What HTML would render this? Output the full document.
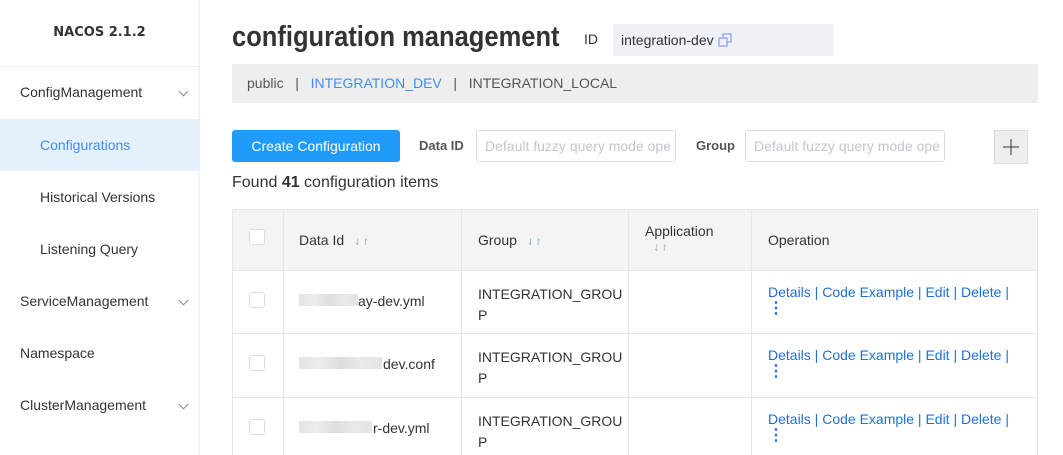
<!DOCTYPE html>
<html><head><meta charset="utf-8"><style>
*{box-sizing:border-box;margin:0;padding:0}
body{width:1063px;height:455px;overflow:hidden;background:#fff;font-family:"Liberation Sans",sans-serif;color:#333;position:relative;font-size:14px}
.a{position:absolute;white-space:nowrap}
.side{position:absolute;left:0;top:0;width:200px;height:455px;border-right:1px solid #eee}
.si{position:absolute;left:0;width:199px;height:52px;line-height:52px;padding-left:20px;font-size:14px;color:#333}
.sub{padding-left:40px}
.chev{position:absolute;right:12px;top:22px;width:7px;height:7px;border-right:1px solid #888;border-bottom:1px solid #888;transform:rotate(45deg)}
.ln{color:#1f6fd8}
.cb{position:absolute;left:249px;width:16px;height:16px;border:1px solid #ddd;border-radius:3px;background:#fff}
.vl{position:absolute;top:209px;height:246px;width:1px;background:#e6e6e6}
.hl{position:absolute;left:232px;width:806px;height:1px;background:#e6e6e6}
.blur{position:absolute;height:12px;background:linear-gradient(90deg,#ddd,#e8e8e8,#d4d4d4,#e4e4e4,#ddd);opacity:.8}
</style></head><body>
<div class="side">
<div class="a" style="left:0;width:199px;top:25px;text-align:center;font-weight:bold;font-family:'DejaVu Sans',sans-serif;font-size:13px">NACOS 2.1.2</div>
<div style="position:absolute;left:0;top:66px;width:199px;height:1px;background:#eee"></div>
<div class="si" style="top:66px">ConfigManagement<span class="chev"></span></div>
<div class="si sub" style="top:119px;background:#e5f1fd;color:#3f8ff0">Configurations</div>
<div class="si sub" style="top:171px">Historical Versions</div>
<div class="si sub" style="top:223px">Listening Query</div>
<div class="si" style="top:275px">ServiceManagement<span class="chev"></span></div>
<div class="si" style="top:327px">Namespace</div>
<div class="si" style="top:379px">ClusterManagement<span class="chev"></span></div>
</div>
<div class="a" style="left:232px;top:21px;font-size:29px;font-weight:bold;font-family:'Liberation Sans',sans-serif;color:#333;transform:scaleX(0.88);transform-origin:0 0">configuration management</div>
<div class="a" style="left:584px;top:31px;font-size:14px">ID</div>
<div class="a" style="left:613px;top:24px;width:220px;height:32px;background:#eef1f6;padding-left:8px;line-height:32px;font-size:14px">integration-dev <svg width="16" height="14" viewBox="0 0 16 14" style="vertical-align:-2px"><rect x="1" y="5" width="8" height="8" fill="none" stroke="#8aa4f5" stroke-width="1.3"/><path d="M5 5V1h8v8H9" fill="none" stroke="#8aa4f5" stroke-width="1.3"/></svg></div>
<div class="a" style="left:232px;top:64px;width:806px;height:39px;background:#eee;line-height:39px;padding-left:15px;font-size:14px;color:#555">public &nbsp;&nbsp;|&nbsp;&nbsp; <span style="color:#3f8ff0">INTEGRATION_DEV</span> &nbsp;&nbsp;|&nbsp;&nbsp; INTEGRATION_LOCAL</div>
<div class="a" style="left:232px;top:130px;width:168px;height:32px;background:#209bfa;border-radius:3px;color:#fff;text-align:center;line-height:32px;font-size:14px">Create Configuration</div>
<div class="a" style="left:419px;top:138px;font-weight:bold;font-size:13px;color:#555">Data ID</div>
<div class="a" style="left:476px;top:130px;width:200px;height:32px;border:1px solid #ddd;border-radius:3px;line-height:30px;padding-left:8px;color:#c4c6cc;font-size:14px;overflow:hidden">Default fuzzy query mode ope</div>
<div class="a" style="left:696px;top:138px;font-weight:bold;font-size:13px;color:#555">Group</div>
<div class="a" style="left:745px;top:130px;width:200px;height:32px;border:1px solid #ddd;border-radius:3px;line-height:30px;padding-left:8px;color:#c4c6cc;font-size:14px;overflow:hidden">Default fuzzy query mode ope</div>
<div class="a" style="left:994px;top:130px;width:34px;height:34px;background:#eee;border:1px solid #ddd"><svg width="32" height="32" viewBox="0 0 32 32"><path d="M16 8v16M8 16h16" stroke="#333" stroke-width="1"/></svg></div>
<div class="a" style="left:232px;top:174px;font-size:16px">Found <b>41</b> configuration items</div>
<div class="a" style="left:232px;top:209px;width:806px;height:61px;background:#f4f4f4"></div>
<div class="hl" style="top:209px"></div><div class="hl" style="top:270px"></div><div class="hl" style="top:333px"></div><div class="hl" style="top:397px"></div>
<div class="vl" style="left:232px"></div><div class="vl" style="left:283px"></div><div class="vl" style="left:461px"></div><div class="vl" style="left:628px"></div><div class="vl" style="left:751px"></div><div class="vl" style="left:1037px"></div>
<div class="cb" style="top:229px"></div><div class="cb" style="top:292px"></div><div class="cb" style="top:355px"></div><div class="cb" style="top:419px"></div>
<div class="a" style="left:299px;top:232px">Data Id <span style="font-size:9px;color:#aaa;margin-left:6px">⇃↾</span></div>
<div class="a" style="left:478px;top:232px">Group <span style="font-size:9px;color:#7aaaf0;margin-left:6px">⇃↾</span></div>
<div class="a" style="left:645px;top:223px">Application</div>
<div class="a" style="left:653px;top:243px;font-size:9px;color:#aaa">⇃↾</div>
<div class="a" style="left:768px;top:232px">Operation</div>
<div class="blur" style="left:299px;top:294px;width:59px"></div><div class="a" style="left:358px;top:293px">ay-dev.yml</div>
<div class="blur" style="left:299px;top:357px;width:83px"></div><div class="a" style="left:383px;top:356px">dev.conf</div>
<div class="blur" style="left:299px;top:421px;width:73px"></div><div class="a" style="left:373px;top:420px">r-dev.yml</div>
<div class="a" style="left:478px;top:284px;line-height:21px">INTEGRATION_GROU<br>P</div>
<div class="a" style="left:478px;top:347px;line-height:21px">INTEGRATION_GROU<br>P</div>
<div class="a" style="left:478px;top:411px;line-height:21px">INTEGRATION_GROU<br>P</div>
<div class="a ln" style="left:768px;top:284px">Details | Code Example | Edit | Delete |<br><span style="font-weight:bold;font-size:16px;line-height:14px">⋮</span></div>
<div class="a ln" style="left:768px;top:347px">Details | Code Example | Edit | Delete |<br><span style="font-weight:bold;font-size:16px;line-height:14px">⋮</span></div>
<div class="a ln" style="left:768px;top:411px">Details | Code Example | Edit | Delete |<br><span style="font-weight:bold;font-size:16px;line-height:14px">⋮</span></div>
</body></html>
